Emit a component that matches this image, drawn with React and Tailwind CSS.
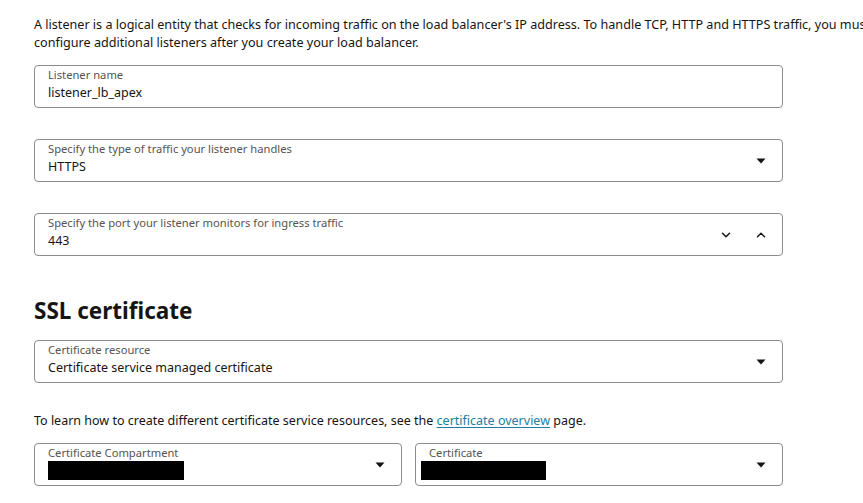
import { ChevronDown, ChevronUp } from "lucide-react";

const font = { fontFamily: '"Noto Sans", "Open Sans", Arial, sans-serif' };

const Caret = () => (
    <svg width="10" height="6" viewBox="0 0 10 6" className="shrink-0">
        <path d="M0.5 0.5 L9.5 0.5 L5 5.5 Z" fill="#161513" />
    </svg>
);

const Field = ({ label, value, right, padClass = "pl-[13px]", labelClass = "" }) => (
    <div className={`flex items-center h-[43px] border border-[#8c8c8c] rounded-[4px] pr-[16px] ${padClass}`}>
        <div className="flex-1 min-w-0 flex flex-col self-start pt-[2px]">
            <span className={`text-[11.2px] leading-[14px] text-[#57534e] ${labelClass}`}>{label}</span>
            <div className="text-[12.5px] leading-[18px] text-[#161513] mt-[2px]">{value}</div>
        </div>
        {right}
    </div>
);

const Redacted = ({ w }) => <div className="h-[19px] bg-black -mt-[1px]" style={{ width: w }} />;

export default function App() {
    return (
        <div className="w-[863px] h-[503px] overflow-hidden bg-white" style={font}>
            <div className="w-[1000px] pl-[34px] pt-[16px]">
                <p className="text-[12.6px] leading-[18px] text-[#161513] w-[900px]">
                    A listener is a logical entity that checks for incoming traffic on the load balancer's IP address. To handle TCP, HTTP and HTTPS traffic, you must
                    <br />
                    configure additional listeners after you create your load balancer.
                </p>

                <div className="w-[749px] mt-[13px] flex flex-col gap-[31px]">
                    <Field label="Listener name" value="listener_lb_apex" />
                    <Field label="Specify the type of traffic your listener handles" value="HTTPS" right={<Caret />} />
                    <Field
                        label="Specify the port your listener monitors for ingress traffic"
                        value="443"
                        right={
                            <div className="flex items-center gap-[21px] mr-[-2px]">
                                <ChevronDown size={14} strokeWidth={2.5} color="#161513" />
                                <ChevronUp size={14} strokeWidth={2.5} color="#161513" />
                            </div>
                        }
                    />
                </div>

                <h2 className="text-[22.5px] leading-[30px] font-bold text-[#161513] mt-[40px]">SSL certificate</h2>

                <div className="w-[749px] mt-[14px]">
                    <Field label="Certificate resource" value="Certificate service managed certificate" right={<Caret />} />
                </div>

                <p className="text-[12.5px] leading-[18px] text-[#161513] mt-[29px]">
                    To learn how to create different certificate service resources, see the{" "}
                    <a className="text-[#227e9e] underline underline-offset-2">certificate overview</a> page.
                </p>

                <div className="w-[749px] mt-[13px] grid grid-cols-2 gap-[13px]">
                    <Field label="Certificate Compartment" value={<Redacted w={136} />} right={<Caret />} />
                    <Field label="Certificate" value={<Redacted w={125} />} right={<Caret />} padClass="pl-[5px]" labelClass="pl-[8px]" />
                </div>
            </div>
        </div>
    );
}
